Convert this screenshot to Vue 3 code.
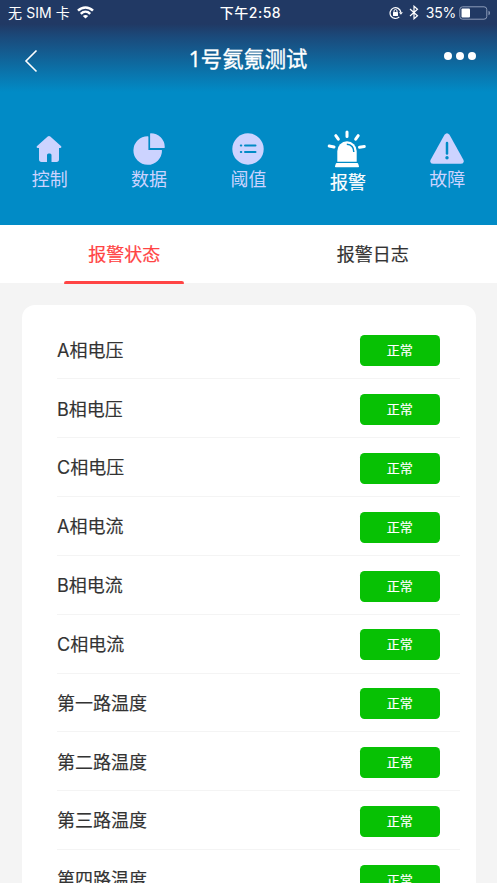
<script setup>
import { ref } from 'vue'

const navItems = [
  { key: 'control', label: '控制' },
  { key: 'data', label: '数据' },
  { key: 'limit', label: '阈值' },
  { key: 'alarm', label: '报警' },
  { key: 'fault', label: '故障' },
]
const activeNav = ref('alarm')

const tabs = ['报警状态', '报警日志']
const activeTab = ref(0)

const rows = [
  'A相电压', 'B相电压', 'C相电压',
  'A相电流', 'B相电流', 'C相电流',
  '第一路温度', '第二路温度', '第三路温度', '第四路温度',
]
</script>

<template>
  <div class="screen">
    <header class="hero">
      <div class="status">
        <div class="carrier">
          <span>无 SIM 卡</span>
          <svg class="wifi" width="17" height="13" viewBox="0 0 17 13" fill="none" stroke="#fff" stroke-width="2.500">
            <path d="M1 4.700C5.300 .5 11.700 .5 16 4.700" />
            <path d="M3.800 7.800C6.500 5.200 10.500 5.200 13.200 7.800" />
            <path d="M8.500 12.500L5.800 9.900Q8.500 7.900 11.200 9.900Z" fill="#fff" stroke="none" />
          </svg>
        </div>
        <div class="time">下午2:58</div>
        <div class="indicators">
          <svg width="14" height="14" viewBox="0 0 14 14" fill="none" stroke="#fff" stroke-width="1.200">
            <path d="M10.300 10.900A5.400 5.400 0 1 1 11.800 6.200" />
            <path d="M9.900 6.200H13.900L11.900 8.800Z" fill="#fff" stroke="none" />
            <rect x="4" y="6" width="5" height="4" rx=".5" fill="#fff" stroke="none" />
            <path d="M5 6.200V5a1.500 1.500 0 0 1 3 0v1.200" stroke-width="1" />
          </svg>
          <svg class="bluetooth" width="10" height="15" viewBox="0 0 10 15" fill="none" stroke="#fff" stroke-width="1.200">
            <path d="M1 4L8.500 10.700L5 13.800V1.200L8.500 4.300L1 11" />
          </svg>
          <span class="percent">35%</span>
          <svg width="32" height="14" viewBox="0 0 32 14">
            <rect x=".8" y=".8" width="27" height="12.400" rx="2.800" fill="none" stroke="#8d9cb9" stroke-width="1" />
            <rect x="2.500" y="2.500" width="8.500" height="9" rx="1" fill="#fff" />
            <path d="M29.500 4.800Q31 5.200 31 7T29.500 9.200Z" fill="#8d9cb9" />
          </svg>
        </div>
      </div>

      <div class="titlebar">
        <svg class="back" width="14" height="24" viewBox="0 0 14 24" fill="none" stroke="#fff" stroke-width="1.600">
          <path d="M12.500 1.500L2 12L12.500 22.500" />
        </svg>
        <h1>1号氦氪测试</h1>
        <div class="more"><i></i><i></i><i></i></div>
      </div>

      <nav class="nav">
        <a v-for="item in navItems" :key="item.key" class="nav-item"
          :class="{ active: item.key === activeNav }" @click="activeNav = item.key">
          <svg v-if="item.key === 'control'" width="32" height="32" viewBox="0 0 32 32" fill="currentColor">
            <path d="M14.700 3.500Q16 2.300 17.300 3.500L28.200 13.300Q29 14.300 27.500 15H26V26.300Q26 29 23.500 29H18.500V22Q18.500 20.500 17 20.500H15.500Q14 20.500 14 22V29H8.500Q6 29 6 26.300V15H4.500Q3 14.300 3.800 13.300Z" />
          </svg>
          <svg v-else-if="item.key === 'data'" width="32" height="32" viewBox="0 0 32 32" fill="currentColor">
            <path d="M14.900 3.200Q15.400 3.200 15.400 3.800V16.900H28.500Q29.100 16.900 29 17.500A14.300 14.300 0 1 1 14.900 3.200Z" />
            <path d="M17.100 .8Q17.100 .2 17.700 .2A14 14 0 0 1 31.800 14.300Q31.800 14.900 31.200 14.900H17.100Z" />
          </svg>
          <svg v-else-if="item.key === 'limit'" width="32" height="32" viewBox="0 0 32 32">
            <circle cx="16" cy="16" r="15.700" fill="currentColor" />
            <path d="M13 12.500H23.500M13 19H23.500M8.800 12.500H9.300M8.800 19H9.300" stroke="#018bc6" stroke-width="2" stroke-linecap="round" />
          </svg>
          <svg v-else-if="item.key === 'alarm'" width="40" height="38" viewBox="0 0 40 38" fill="currentColor">
            <path d="M10.300 31.700V21a9.700 9.700 0 0 1 19.400 0V31.700Z" />
            <path d="M9.800 32.900H30.200Q31 32.900 31.200 33.700L32 36.300Q32.200 37.300 31.200 37.300H8.800Q7.800 37.300 8 36.300L8.800 33.700Q9 32.900 9.800 32.900Z" />
            <path d="M19.800 14.300Q26.800 14.800 26.800 22" fill="none" stroke="#018bc6" stroke-width="1.500" />
            <path d="M20 2V6.500M8.800 5.700L11.300 9.200M31.200 5.700L28.700 9.200M2.200 16L7 17M37.300 16.500L32.500 17.200" fill="none" stroke="currentColor" stroke-width="3" stroke-linecap="round" />
          </svg>
          <svg v-else width="36" height="32" viewBox="0 0 36 32">
            <path d="M15.500 1.800Q18-1.300 20.500 1.800L34.500 27Q35.500 30.500 32 30.700H4Q.5 30.500 1.500 27Z" fill="currentColor" />
            <path d="M18 10V20.500" stroke="#018bc6" stroke-width="2.500" stroke-linecap="round" />
            <circle cx="18" cy="24.800" r="1.700" fill="#018bc6" />
          </svg>
          <span>{{ item.label }}</span>
        </a>
      </nav>
    </header>

    <div class="tabs">
      <button v-for="(tab, i) in tabs" :key="tab" class="tab" :class="{ selected: i === activeTab }" @click="activeTab = i">
        {{ tab }}
      </button>
    </div>

    <main class="card">
      <div v-for="row in rows" :key="row" class="row">
        <span class="label">{{ row }}</span>
        <span class="state">正常</span>
      </div>
    </main>
  </div>
</template>

<style>
body {
  margin: 0;
  overflow: hidden;
}
</style>

<style scoped>
.screen {
  width: 497px;
  height: 883px;
  overflow: hidden;
  background: #f4f4f4;
  font-family: Inter, "Noto Sans CJK SC", sans-serif;
  color: #333;
}
.hero {
  height: 225.300px;
  background: linear-gradient(#213964 0, #213964 24px, #1b497a 36px, #018bc6 92px);
  color: #fff;
}
.status {
  display: grid;
  grid-template-columns: 1fr auto 1fr;
  align-items: center;
  height: 25px;
  padding: 0 6px 0 8px;
  font-size: 14px;
  line-height: 25px;
}
.carrier,
.indicators {
  display: flex;
  align-items: center;
}
.carrier {
  gap: 7.500px;
}
.carrier span {
  letter-spacing: 0.1px;
}
.wifi {
  margin-top: -1px;
}
.time {
  padding-left: 2px;
  font-weight: 500;
  letter-spacing: 0.5px;
}
.indicators {
  justify-content: flex-end;
}
.bluetooth {
  margin: 0 7px 0 6px;
}
.percent {
  margin-right: 3px;
  letter-spacing: -0.2px;
}
.titlebar {
  display: grid;
  grid-template-columns: 60px 1fr 60px;
  align-items: center;
  height: 68px;
  padding: 0 21px 0 24px;
}
.back {
  margin-top: 3px;
}
h1 {
  margin: 0 4px 0 0;
  text-align: center;
  font-family: "Open Sans", "Noto Sans CJK SC", sans-serif;
  font-size: 21.300px;
  font-weight: 400;
  line-height: 32px;
  -webkit-text-stroke: 0.35px currentColor;
}
.more {
  display: flex;
  justify-content: flex-end;
  gap: 3.800px;
  margin-top: -6px;
}
.more i {
  width: 8.200px;
  height: 8.200px;
  border-radius: 50%;
  background: #fff;
}
.nav {
  display: flex;
  padding-top: 37px;
}
.nav-item {
  display: flex;
  flex: 1;
  flex-direction: column;
  align-items: center;
  padding-top: 3px;
  color: #ccd3ff;
  font-size: 18px;
  line-height: 30px;
}
.nav-item svg {
  margin-right: 1px;
}
.nav-item.active {
  padding-top: 0;
  color: #fff;
}
.nav-item.active span {
  -webkit-text-stroke: 0.2px currentColor;
}
.tabs {
  display: flex;
  height: 57.700px;
  background: #fff;
}
.tab {
  flex: 1;
  display: flex;
  flex-direction: column;
  align-items: center;
  justify-content: space-between;
  height: 58.600px;
  padding: 16px 0 0;
  border: 0;
  background: none;
  color: #333;
  font-family: inherit;
  font-size: 18px;
  line-height: 28px;
  -webkit-text-stroke: 0.2px currentColor;
}
.tab.selected {
  color: #ff4444;
}
.tab.selected::after {
  content: "";
  width: 120px;
  height: 3px;
  border-radius: 3px 3px 1px 1px;
  background: #ff4444;
}
.card {
  box-sizing: border-box;
  margin: 22px 21.500px 0;
  padding: 15.500px 15.500px 15px 35.500px;
  border-radius: 13px;
  background: #fff;
}
.row {
  display: flex;
  align-items: center;
  justify-content: space-between;
  box-sizing: border-box;
  height: 58.850px;
  padding-right: 20.500px;
  border-bottom: 1px solid #f4f4f4;
}
.label {
  padding-top: 2.500px;
  font-size: 18px;
  line-height: 28px;
  -webkit-text-stroke: 0.15px currentColor;
}
.state {
  width: 79.500px;
  height: 31px;
  margin-top: 2.500px;
  border-radius: 4.500px;
  background: #07c104;
  color: #fff;
  font-size: 13px;
  font-weight: 400;
  line-height: 31.500px;
  text-align: center;
  -webkit-text-stroke: 0.2px currentColor;
}
</style>
